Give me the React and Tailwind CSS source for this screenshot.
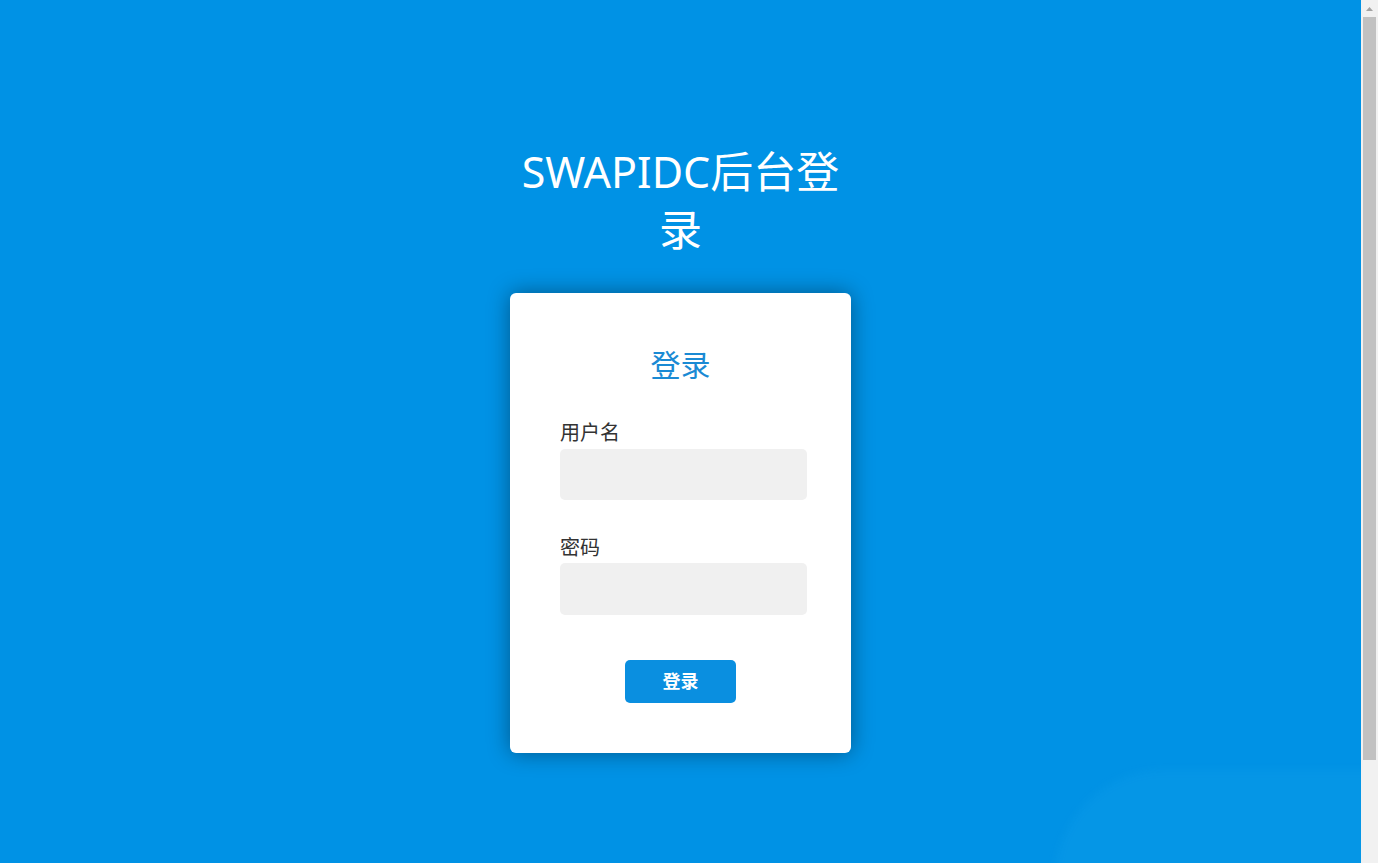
export default function App() {
  const font = { fontFamily: '"Noto Sans", "Noto Sans CJK SC", sans-serif' };

  return (
    <div className="flex h-[863px] w-full overflow-hidden" style={font}>
      <main className="relative h-full flex-1 overflow-hidden bg-[#0092e5] pt-[143px]">
        <div className="flex flex-col items-center">
          <h1 className="w-[340px] text-center text-[43px] font-normal leading-[58px] text-white">
            SWAPIDC后台登录
          </h1>

          <div className="mt-[34px] w-[341px] rounded-md bg-white pb-[50px] pl-[50px] pr-[44px] pt-[52px] shadow-[0_0_22px_rgba(0,0,0,0.4)]">
            <h2 className="pr-[6px] text-center text-[30px] font-normal leading-[40px] text-[#1a8ad4]">登录</h2>

            <form className="mt-[36px]" onSubmit={(e) => e.preventDefault()}>
              <label className="block text-[20px] leading-[24px] text-[#333]">用户名</label>
              <input
                type="text"
                className="mt-[4px] block h-[51px] w-[247px] rounded-[5px] bg-[#f0f0f0] px-3 outline-none"
              />

              <label className="mt-[36px] block text-[20px] leading-[24px] text-[#333]">密码</label>
              <input
                type="password"
                className="mt-[3px] block h-[52px] w-[247px] rounded-[5px] bg-[#f0f0f0] px-3 outline-none"
              />

              <div className="mt-[45px] flex justify-center pr-[6px]">
                <button
                  type="submit"
                  className="h-[43px] w-[111px] rounded-[5px] bg-[#0a8fe0] text-[18px] font-bold text-white"
                >
                  登录
                </button>
              </div>
            </form>
          </div>
        </div>

        {/* faint light blob in the bottom right corner */}
        <div className="pointer-events-none absolute left-[1055px] top-[770px] h-[220px] w-[420px] rounded-[110px] bg-[#30b8f8]/10 blur-[4px]" />
      </main>

      {/* scrollbar */}
      <div className="flex w-[17px] shrink-0 flex-col bg-[#f1f1f1]">
        <div className="flex h-[17px] items-center justify-center">
          <svg width="7" height="4" viewBox="0 0 7 4">
            <path d="M0 4 L3.5 0 L7 4 Z" fill="#a3a3a3" />
          </svg>
        </div>
        <div className="mx-[2px] h-[743px] bg-[#c1c1c1]" />
      </div>
    </div>
  );
}
